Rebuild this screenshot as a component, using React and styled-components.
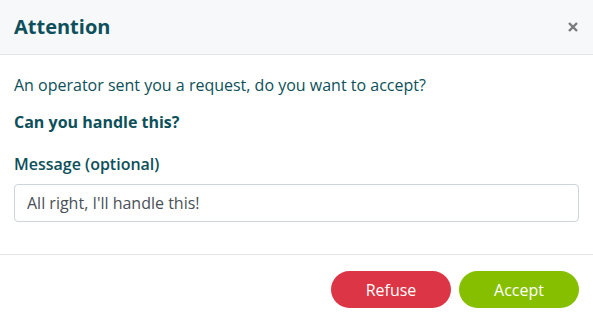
import React from "react";
import styled, { createGlobalStyle } from "styled-components";

const Global = createGlobalStyle`
  html, body { margin: 0; padding: 0; background: #fff; }
  body { font-family: "Open Sans", "Noto Sans", sans-serif; }
  * { box-sizing: border-box; }
`;

const Modal = styled.div`
  width: 593px;
  height: 322px;
  background: #fff;
  display: flex;
  flex-direction: column;
`;

const Header = styled.div`
  height: 55px;
  background: #f7f8fa;
  border-bottom: 1px solid #e2e4e8;
  display: flex;
  align-items: center;
  justify-content: space-between;
  padding: 0 14px;
`;

const Title = styled.h2`
  margin: 0;
  font-size: 20px;
  line-height: 26px;
  font-weight: 700;
  color: #0d4f5a;
`;

const Close = styled.button`
  border: 0;
  background: none;
  padding: 0;
  width: 12px;
  height: 12px;
  display: flex;
  color: #7a7a7a;
  cursor: pointer;
`;

const Body = styled.div`
  padding: 19px 14px 0;
  display: flex;
  flex-direction: column;
  height: 200px;
  border-bottom: 1px solid #e2e4e8;
`;

const Text = styled.p`
  margin: 0 0 ${(p) => p.$mb || 0}px;
  font-size: 16px;
  line-height: 22px;
  color: #0d4f5a;
  font-weight: ${(p) => p.$weight || 400};
`;

const Input = styled.input`
  width: 100%;
  height: 38px;
  border: 1px solid #ced4da;
  border-radius: 4px;
  padding: 0 12px;
  font-family: inherit;
  font-size: 16px;
  color: #495057;
  outline: none;
`;

const Footer = styled.div`
  display: flex;
  justify-content: flex-end;
  gap: 8px;
  padding: 16px 14px 0;
`;

const Button = styled.button`
  width: 120px;
  height: 37px;
  border: 0;
  border-radius: 19px;
  background: ${(p) => p.$bg};
  color: #fff;
  font-family: inherit;
  font-size: 16px;
  cursor: pointer;
`;

export default function App() {
  return (
    <Modal>
      <Global />
      <Header>
        <Title>Attention</Title>
        <Close aria-label="Close">
          <svg width="12" height="12" viewBox="0 0 12 12">
            <path d="M2 2L10 10M10 2L2 10" stroke="currentColor" strokeWidth="2.4" strokeLinecap="butt" />
          </svg>
        </Close>
      </Header>
      <Body>
        <Text $mb={15}>An operator sent you a request, do you want to accept?</Text>
        <Text $weight={700} $mb={20}>Can you handle this?</Text>
        <Text $weight={600} $mb={9}>Message (optional)</Text>
        <Input defaultValue="All right, I'll handle this!" />
      </Body>
      <Footer>
        <Button $bg="#dc3545">Refuse</Button>
        <Button $bg="#85bf00">Accept</Button>
      </Footer>
    </Modal>
  );
}
